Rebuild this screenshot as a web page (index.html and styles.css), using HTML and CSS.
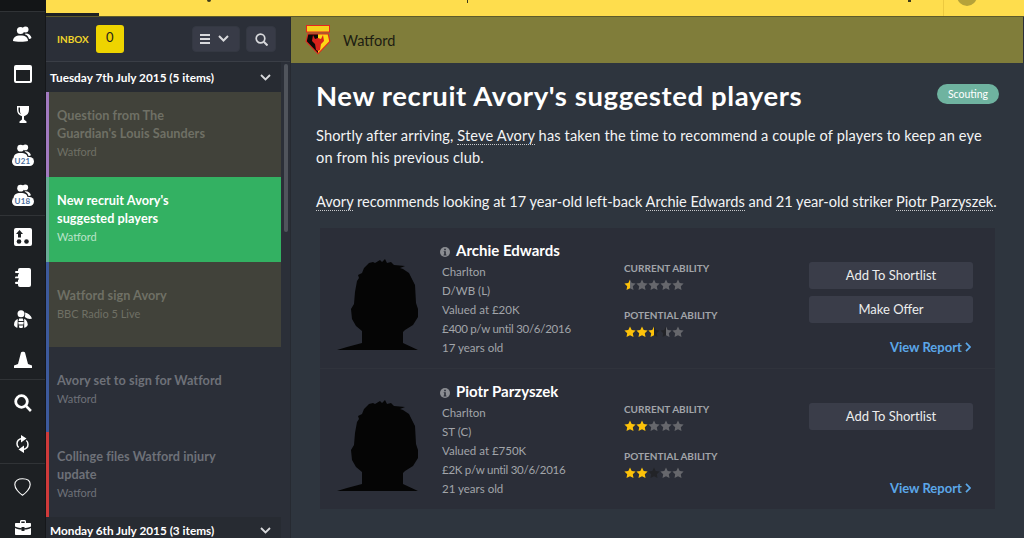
FILE: index.html
```html
<!DOCTYPE html>
<html lang="en">
<head>
<meta charset="utf-8">
<title>Inbox</title>
<link rel="stylesheet" href="styles.css">
</head>
<body>
<svg class="defs" width="0" height="0" aria-hidden="true">
  <defs>
    <path id="star" d="M6 0.4 7.7 4 11.6 4.5 8.8 7.2 9.5 11.1 6 9.2 2.5 11.1 3.2 7.2 0.4 4.5 4.3 4Z"/>
    <linearGradient id="goldgrey"><stop offset="50%" stop-color="#fdc20a"/><stop offset="50%" stop-color="#66676c"/></linearGradient>
    <linearGradient id="golddark"><stop offset="50%" stop-color="#fdc20a"/><stop offset="50%" stop-color="#222327"/></linearGradient>
    <linearGradient id="darkgrey"><stop offset="50%" stop-color="#222327"/><stop offset="50%" stop-color="#66676c"/></linearGradient>
    <g id="people">
      <circle cx="7.500" cy="4.500" r="3.600"/><circle cx="12.500" cy="3.600" r="3"/>
      <path d="M0 15c0-3.500 2.500-5.500 7.500-5.500S15 11.500 15 15c-2 1-13 1-15 0Z"/>
      <path d="M12.500 7.600c3.500 0 5.500 1.800 6 4.500-.8.600-1.700.8-2.500.9-.5-2.400-1.800-4-4.200-4.800Z"/>
    </g>
    <path id="silhouette" d="M0 91 10 88 25 84 25 72 19 67 15 60 14 50 17 45 18 33 20 22 22 19 21 16 25 14 27 9 32 4 36 3 38 4 43 1 45 3 48 0 50 4 54 3 57 6 68 7 63 9 66 10 72 14 78 26 79 44 81 50 81 58 76 66 68 71 66 73 66 84 81 91Z"/>
  </defs>
</svg>
<div class="app">
  <nav class="rail">
    <div class="rail-top"></div>
    <div class="rail-group group-a">
      <div class="rail-item"><svg class="ic" width="19" height="16" viewBox="0 0 19 16"><use href="#people"/></svg></div>
      <div class="rail-item"><svg class="ic" width="18" height="18" viewBox="0 0 18 18"><path fill-rule="evenodd" d="M2 0h14a2 2 0 0 1 2 2v14a2 2 0 0 1-2 2H2a2 2 0 0 1-2-2V2a2 2 0 0 1 2-2ZM2 5v10.500a.5.500 0 0 0 .5.500h13a.5.500 0 0 0 .5-.500V5Z"/></svg></div>
      <div class="rail-item"><svg class="ic" width="12" height="17" viewBox="0 0 12 17"><path d="M0 0h12v3.500C12 7 10 9.500 7 10.200V13.500l2.500 2V17h-7v-1.500l2.500-2V10.200C2 9.500 0 7 0 3.500Z"/><path fill="#1d2023" d="M1.500 1.500h1.500v3.500c0 1.500.5 2.500 1.200 3.200C2.500 7.500 1.500 6 1.500 4Z"/></svg></div>
      <div class="rail-item squad">
        <svg class="ic" width="19" height="15" viewBox="0 0 19 16"><use href="#people"/></svg>
        <span class="pill">U21</span>
      </div>
      <div class="rail-item squad">
        <svg class="ic" width="19" height="15" viewBox="0 0 19 16"><use href="#people"/></svg>
        <span class="pill">U18</span>
      </div>
    </div>
    <div class="rail-group group-b">
      <div class="rail-item"><svg class="ic" width="18" height="18" viewBox="0 0 18 18"><rect width="18" height="18" rx="2"/><path fill="#1d2023" d="M5.500 2 9 6H7v3.500H4V6H2Z"/><circle fill="#1d2023" cx="5" cy="13.500" r="2.300"/><circle fill="#1d2023" cx="12.500" cy="13.500" r="2.300"/></svg></div>
      <div class="rail-item"><svg class="ic" width="16" height="19" viewBox="0 0 16 19"><path d="M3 2a2 2 0 0 1 2-2h9a2 2 0 0 1 2 2v15a2 2 0 0 1-2 2H5a2 2 0 0 1-2-2Z"/><rect y="3" width="5" height="2.200" rx="1.100"/><rect y="8.400" width="5" height="2.200" rx="1.100"/><rect y="13.800" width="5" height="2.200" rx="1.100"/><path fill="#1d2023" d="M1 5.200h3v1H1Zm0 5.400h3v1H1Z"/></svg></div>
      <div class="rail-item"><svg class="ic" width="18" height="18" viewBox="0 0 18 18"><circle cx="7" cy="3.800" r="3.500"/><path d="M5.200 8.500h3.600L9.500 11H4.500ZM4.300 12h5.400l-.3 2.500H4.600ZM4.800 15.500h4.400L8.500 18h-3Z"/><path d="M0 15c0-3 1.500-5.500 3.800-6L3.400 17.800C1.800 17.500.5 16.500 0 15Z"/><path d="M10.200 8.800c2.200 1 3.300 3.300 3.600 6-.6 1.700-2 2.800-3.600 3Z"/><path d="M11 2.500c3 .8 5.800 2.800 7 6-1.800 1-4.800.5-7.200-1.500.4-1.400.6-3 .2-4.500Z"/></svg></div>
      <div class="rail-item"><svg class="ic" width="18" height="17" viewBox="0 0 18 17"><path d="M7 1.500C7.300.5 10.700.5 11 1.500L14 13 18 14.500V17H0V14.500L4 13Z"/></svg></div>
    </div>
    <div class="rail-group group-c">
      <div class="rail-item"><svg class="ic" width="18" height="18" viewBox="0 0 18 18"><circle cx="7.500" cy="7.500" r="5.800" fill="none" stroke="#fff" stroke-width="2.800"/><path d="M12 10l5.800 6-1.800 2-5.800-6Z"/></svg></div>
      <div class="rail-item"><svg class="ic" width="13" height="20" viewBox="0 0 13 20"><path fill="none" stroke="#fff" stroke-width="1.500" d="M6 4.500C2.800 5 1 7.200 1 9.800c0 1.600.6 2.800 1.700 3.700M7 15.500c3.200-.5 5-2.700 5-5.300 0-1.600-.6-2.800-1.700-3.700"/><path d="M5 1 10.500 4.500 5 8.500ZM8 11.500 2.500 15.500 8 19Z"/></svg></div>
    </div>
    <div class="rail-group group-d">
      <div class="rail-item"><svg class="ic" width="17" height="18" viewBox="0 0 17 18"><path fill="none" stroke="#fff" stroke-width="1.100" d="M8.500.8C12.500.8 16.200 2.500 16.200 6.500 16.200 10.500 12 15 8.500 17.200 5 15 .8 10.500.8 6.500.8 2.500 4.500.8 8.500.8Z"/></svg></div>
      <div class="rail-item"><svg class="ic" width="16" height="15" viewBox="0 0 16 15"><path d="M5 3V1.500C5 .6 5.600 0 6.500 0h3C10.400 0 11 .6 11 1.500V3h4c.6 0 1 .4 1 1v2.500C13.500 7.800 10.500 8.200 9.500 8.200V7h-3v1.200C5.500 8.200 2.500 7.800 0 6.500V4c0-.6.400-1 1-1Zm1.300 0h3.400V1.500H6.300ZM0 8c2 1 4.500 1.500 6.500 1.600V11h3V9.600C11.500 9.500 14 9 16 8v6c0 .6-.4 1-1 1H1c-.6 0-1-.4-1-1Z"/></svg></div>
    </div>
  </nav>

  <div class="shell">
    <header class="topbar">
      <span class="topbar-tab"></span>
      <span class="frag frag-a"></span>
      <span class="frag frag-b"></span>
      <span class="frag frag-c"></span>
      <span class="topbar-div"></span>
      <span class="topbar-help"></span>
    </header>

    <div class="panels">
      <aside class="inbox">
        <div class="inbox-head">
          <span class="inbox-label">INBOX</span>
          <span class="inbox-count">0</span>
          <button class="tool tool-menu" type="button" aria-label="Menu">
            <svg width="32" height="10" viewBox="0 0 32 10"><path fill="#d8d9dc" d="M0 0h10v2H0Zm0 4h10v2H0Zm0 4h10v2H0Z"/><path fill="none" stroke="#d8d9dc" stroke-width="2" d="M19 2l4.500 4.500L28 2"/></svg>
          </button>
          <button class="tool tool-search" type="button" aria-label="Search">
            <svg width="13" height="13" viewBox="0 0 13 13"><circle cx="5.500" cy="5.500" r="4.300" fill="none" stroke="#d8d9dc" stroke-width="1.700"/><path fill="none" stroke="#d8d9dc" stroke-width="2" d="M8.800 8.800 12.500 12.500"/></svg>
          </button>
        </div>
        <div class="inbox-body">
          <div class="list">
            <div class="day">
              <span>Tuesday 7th July 2015 (5 items)</span>
              <svg width="11" height="7" viewBox="0 0 11 7"><path fill="none" stroke="#d8d9dc" stroke-width="1.800" d="M1 1l4.500 4.500L10 1"/></svg>
            </div>
            <article class="msg msg-read bar-purple">
              <h3>Question from The<br>Guardian's Louis Saunders</h3>
              <p>Watford</p>
            </article>
            <article class="msg msg-active bar-teal">
              <h3>New recruit Avory's<br>suggested players</h3>
              <p>Watford</p>
            </article>
            <article class="msg msg-read bar-blue">
              <h3>Watford sign Avory</h3>
              <p>BBC Radio 5 Live</p>
            </article>
            <article class="msg bar-blue">
              <h3>Avory set to sign for Watford</h3>
              <p>Watford</p>
            </article>
            <article class="msg bar-red">
              <h3>Collinge files Watford injury<br>update</h3>
              <p>Watford</p>
            </article>
            <div class="day day-next">
              <span>Monday 6th July 2015 (3 items)</span>
              <svg width="11" height="7" viewBox="0 0 11 7"><path fill="none" stroke="#d8d9dc" stroke-width="1.800" d="M1 1l4.500 4.500L10 1"/></svg>
            </div>
          </div>
          <div class="track"><span class="thumb"></span></div>
        </div>
      </aside>

      <main class="main">
        <div class="club">
          <svg class="crest" width="26" height="30" viewBox="0 0 26 30">
            <rect x="1.500" y="0.500" width="23" height="6.500" fill="#f6d21c" stroke="#e5261f"/>
            <path d="M2.500 8.500h21l2 8-12.500 13L.5 16.500Z" fill="#e5261f"/>
            <path d="M3.300 9.500H13v18.500L1.800 16.300Z" fill="#0b0a08"/>
            <path d="M13 9.500h9.700l1.500 6.800L13 28Z" fill="#fdd615"/>
            <path d="M8 10l2 4 3-1 3 1 2-4 1 6-3 3-1 6-2 1-2-1-1-6-3-3Z" fill="#d8231c"/>
          </svg>
          <span class="club-name">Watford</span>
        </div>
        <div class="article">
          <div class="title-row">
            <h1>New recruit Avory's suggested players</h1>
            <span class="tag">Scouting</span>
          </div>
          <p class="lead lead-one">Shortly after arriving, <span class="link">Steve Avory</span> has taken the time to recommend a couple of players to keep an eye<br>on from his previous club.</p>
          <p class="lead lead-two"><span class="link">Avory</span> recommends looking at 17 year-old left-back <span class="link">Archie Edwards</span> and 21 year-old striker <span class="link">Piotr Parzyszek</span>.</p>

          <section class="players">
            <div class="player">
              <svg class="photo" width="81" height="91" viewBox="0 0 81 91"><use href="#silhouette"/></svg>
              <div class="info">
                <div class="name-row">
                  <svg class="info-ic" width="10" height="10" viewBox="0 0 10 10"><circle cx="5" cy="5" r="5" fill="#8b8d92"/><path fill="#2b2e38" d="M4.200 1.800h1.600v1.400H4.200Zm-.5 2.400h2.100v3.400h.6v.9H3.600v-.9h.6V5.100h-.5Z"/></svg>
                  <h2>Archie Edwards</h2>
                </div>
                <ul class="facts">
                  <li>Charlton</li>
                  <li>D/WB (L)</li>
                  <li>Valued at £20K</li>
                  <li class="wage">£400 p/w until 30/6/2016</li>
                  <li>17 years old</li>
                </ul>
              </div>
              <div class="ability">
                <h4>CURRENT ABILITY</h4>
                <div class="stars">
                  <svg width="12" height="12" viewBox="0 0 12 12" fill="url(#goldgrey)"><use href="#star"/></svg>
                  <svg class="off" width="12" height="12" viewBox="0 0 12 12"><use href="#star"/></svg>
                  <svg class="off" width="12" height="12" viewBox="0 0 12 12"><use href="#star"/></svg>
                  <svg class="off" width="12" height="12" viewBox="0 0 12 12"><use href="#star"/></svg>
                  <svg class="off" width="12" height="12" viewBox="0 0 12 12"><use href="#star"/></svg>
                </div>
                <h4 class="second">POTENTIAL ABILITY</h4>
                <div class="stars">
                  <svg class="on" width="12" height="12" viewBox="0 0 12 12"><use href="#star"/></svg>
                  <svg class="on" width="12" height="12" viewBox="0 0 12 12"><use href="#star"/></svg>
                  <svg width="12" height="12" viewBox="0 0 12 12" fill="url(#golddark)"><use href="#star"/></svg>
                  <svg width="12" height="12" viewBox="0 0 12 12" fill="url(#darkgrey)"><use href="#star"/></svg>
                  <svg class="off" width="12" height="12" viewBox="0 0 12 12"><use href="#star"/></svg>
                </div>
              </div>
              <div class="actions">
                <button class="btn" type="button">Add To Shortlist</button>
                <button class="btn" type="button">Make Offer</button>
                <a class="report">View Report <svg width="6" height="10" viewBox="0 0 6 10"><path fill="none" stroke="#5ba7e8" stroke-width="1.800" d="M1 .8 5 5 1 9.200"/></svg></a>
              </div>
            </div>
            <div class="player">
              <svg class="photo" width="81" height="91" viewBox="0 0 81 91"><use href="#silhouette"/></svg>
              <div class="info">
                <div class="name-row">
                  <svg class="info-ic" width="10" height="10" viewBox="0 0 10 10"><circle cx="5" cy="5" r="5" fill="#8b8d92"/><path fill="#2b2e38" d="M4.200 1.800h1.600v1.400H4.200Zm-.5 2.400h2.100v3.400h.6v.9H3.600v-.9h.6V5.100h-.5Z"/></svg>
                  <h2>Piotr Parzyszek</h2>
                </div>
                <ul class="facts">
                  <li>Charlton</li>
                  <li>ST (C)</li>
                  <li>Valued at £750K</li>
                  <li class="wage">£2K p/w until 30/6/2016</li>
                  <li>21 years old</li>
                </ul>
              </div>
              <div class="ability">
                <h4>CURRENT ABILITY</h4>
                <div class="stars">
                  <svg class="on" width="12" height="12" viewBox="0 0 12 12"><use href="#star"/></svg>
                  <svg class="on" width="12" height="12" viewBox="0 0 12 12"><use href="#star"/></svg>
                  <svg class="off" width="12" height="12" viewBox="0 0 12 12"><use href="#star"/></svg>
                  <svg class="off" width="12" height="12" viewBox="0 0 12 12"><use href="#star"/></svg>
                  <svg class="off" width="12" height="12" viewBox="0 0 12 12"><use href="#star"/></svg>
                </div>
                <h4 class="second">POTENTIAL ABILITY</h4>
                <div class="stars">
                  <svg class="on" width="12" height="12" viewBox="0 0 12 12"><use href="#star"/></svg>
                  <svg class="on" width="12" height="12" viewBox="0 0 12 12"><use href="#star"/></svg>
                  <svg class="dark" width="12" height="12" viewBox="0 0 12 12"><use href="#star"/></svg>
                  <svg class="off" width="12" height="12" viewBox="0 0 12 12"><use href="#star"/></svg>
                  <svg class="off" width="12" height="12" viewBox="0 0 12 12"><use href="#star"/></svg>
                </div>
              </div>
              <div class="actions">
                <button class="btn" type="button">Add To Shortlist</button>
                <a class="report">View Report <svg width="6" height="10" viewBox="0 0 6 10"><path fill="none" stroke="#5ba7e8" stroke-width="1.800" d="M1 .8 5 5 1 9.200"/></svg></a>
              </div>
            </div>
          </section>
        </div>
      </main>
    </div>
  </div>
</div>
</body>
</html>
```

FILE: styles.css
```css
* { box-sizing: border-box; }
html, body { margin: 0; padding: 0; height: 100%; }
body {
  width: 1024px;
  height: 538px;
  overflow: hidden;
  background: #2e353e;
  font-family: "Lato", "Open Sans", sans-serif;
  color: #fff;
}
h1, h2, h3, h4, p, ul { margin: 0; padding: 0; }
ul { list-style: none; }
.defs { position: absolute; }

.app { display: flex; width: 1024px; height: 538px; overflow: hidden; }

/* left rail */
.rail { width: 46px; flex: none; height: 538px; background: #1d2023; border-right: 1px solid #15171a; overflow: hidden; }
.rail-top { height: 12px; background: #131517; border-bottom: 1px solid #303336; }
.rail-group { border-bottom: 1px solid #303336; }
.group-a { height: 204px; padding-top: 2px; }
.group-b { height: 164px; }
.group-c { height: 84px; padding-top: 2px; }
.group-d { border-bottom: 0; padding-top: 3px; }
.rail-item { height: 40px; display: flex; flex-direction: column; align-items: center; justify-content: center; position: relative; }
.group-b .rail-item, .group-c .rail-item { height: 41px; }
.ic { fill: #fff; display: block; }
.squad { padding-top: 0; }
.squad .ic { margin-top: 1px; }
.pill {
  display: block;
  width: 22px;
  height: 9px;
  margin-top: -2px;
  border-radius: 5px;
  background: #fff;
  color: #4b6d9c;
  font-size: 8px;
  line-height: 9px;
  font-weight: 700;
  text-align: center;
  letter-spacing: .3px;
}

/* top strip */
.shell { flex: 1; min-width: 0; display: flex; flex-direction: column; }
.topbar { height: 17px; flex: none; background: #fedd4d; border-bottom: 1px solid #5d5a2a; position: relative; }
.topbar-tab { position: absolute; left: 0; bottom: 0; width: 53px; height: 3px; background: #1d2023; }
.frag { position: absolute; top: 0; width: 2px; height: 2px; background: #3d3a1c; }
.frag-a { left: 161px; width: 4px; border-radius: 0 0 3px 3px; }
.frag-b { left: 421px; width: 1px; height: 3px; }
.frag-c { left: 862px; width: 3px; }
.topbar-div { position: absolute; left: 897px; top: 0; width: 1px; height: 16px; background: #ecc93f; }
.topbar-help { position: absolute; left: 911px; top: -14px; width: 20px; height: 20px; border-radius: 50%; background: #b5a23a; }

.panels { flex: 1; display: flex; min-height: 0; }

/* inbox list */
.inbox { width: 245px; flex: none; display: flex; flex-direction: column; background: #2b2f38; border-right: 1px solid #262a31; }
.inbox-head { height: 45px; flex: none; display: flex; align-items: center; padding: 0 14px 0 11px; border-bottom: 1px solid #3a3e46; }
.inbox-label { color: #f0d42b; font-size: 10px; font-weight: 700; }
.inbox-count { width: 28px; height: 28px; margin-left: 7px; border-radius: 3px; background: #eed400; color: #23231a; font-size: 13px; line-height: 25px; text-align: center; }
.tool { height: 26px; border: 1px solid #343842; border-radius: 4px; background: #383b47; padding: 0; display: flex; align-items: center; justify-content: center; }
.tool-menu { width: 48px; margin-left: auto; }
.tool-search { width: 30px; margin-left: 6px; }
.inbox-body { flex: 1; display: flex; min-height: 0; }
.list { width: 235px; flex: none; }
.day { height: 30px; display: flex; align-items: center; justify-content: space-between; padding: 0 10px 0 4px; background: #272b32; font-size: 11.8px; font-weight: 700; }
.day-next { height: 27px; }
.msg { height: 85px; padding-left: 8px; border-left: 3px solid; color: #6e7178; display: flex; flex-direction: column; justify-content: center; }
.msg h3 { font-size: 12.7px; line-height: 18px; font-weight: 700; letter-spacing: .05px; }
.msg p { font-size: 11px; line-height: 19px; margin-top: 0; }
.msg-read { background: #41423a; color: #6f7065; }
.msg-active { background: #33b162; color: #fff; }
.msg-active p { color: #b9e4c8; }
.bar-purple { border-left-color: #a27ac0; padding-bottom: 2px; }
.bar-teal { border-left-color: #6aab96; padding-bottom: 2px; }
.bar-blue { border-left-color: #3d5a9c; }
.bar-red { border-left-color: #cf3a3a; }
.track { flex: 1; padding: 2px 0 0 3px; }
.thumb { display: block; width: 4px; height: 168px; border-radius: 2px; background: #50545c; }

/* main */
.main { flex: 1; min-width: 0; display: flex; flex-direction: column; }
.club { height: 46px; flex: none; display: flex; align-items: center; padding-left: 14px; background: #807d3a; border-right: 1px solid #2b2f38; }
.crest { margin-top: -1px; }
.club-name { margin-left: 12px; color: #1c1c12; font-size: 14.5px; }
.article { padding: 18px 25px 0 25px; }
.title-row { display: flex; align-items: center; justify-content: space-between; height: 29px; }
h1 { font-size: 27.5px; line-height: 29px; font-weight: 700; letter-spacing: .6px; }
.tag { width: 62px; height: 20px; border-radius: 10px; background: #6fb3a0; font-size: 10.5px; line-height: 20px; text-align: center; margin-top: -4px; }
.lead { margin-top: 15px; font-size: 14.6px; line-height: 22px; color: #f3f4f5; white-space: nowrap; }
.lead-one { letter-spacing: .13px; }
.lead-two { margin-top: 22px; letter-spacing: -.01px; }
.link { border-bottom: 1px dotted #c8cacc; }

.players { margin: 15px 4px 0 4px; background: #2b2e38; width: 675px; }
.player { height: 141px; display: flex; border-bottom: 1px solid #30333c; padding-left: 17px; }
.player:last-child { border-bottom: 0; height: 140px; }
.photo { flex: none; margin-top: 31px; fill: #050505; }
.info { width: 184px; flex: none; margin-left: 22px; padding-top: 13px; }
.name-row { display: flex; align-items: center; height: 18px; }
.info-ic { margin-top: 4px; }
h2 { font-size: 15px; line-height: 18px; font-weight: 700; margin-left: 6px; }
.facts { margin: 3px 0 0 2px; color: #a2a5aa; font-size: 11.5px; line-height: 19px; }
.wage { letter-spacing: -.27px; }
.ability { width: 185px; flex: none; padding-top: 33px; }
.ability h4 { font-size: 10px; line-height: 14px; font-weight: 700; color: #a2a5aa; }
.ability .second { margin-top: 17px; }
.stars { display: flex; height: 12px; margin-top: 4px; }
.stars svg { display: block; }
.on { fill: #fdc20a; }
.off { fill: #66676c; }
.dark { fill: #222327; }
.actions { width: 164px; flex: none; padding-top: 34px; display: flex; flex-direction: column; height: 100%; }
.btn { height: 27px; border: 0; border-radius: 3px; background: #3a3d49; color: #eceded; font-family: inherit; font-size: 13px; padding: 0 0 2px; margin-bottom: 7px; }
.report { margin-top: auto; margin-bottom: 13px; padding-right: 2px; text-align: right; color: #5ba7e8; font-size: 13px; line-height: 16px; font-weight: 700; }
```
